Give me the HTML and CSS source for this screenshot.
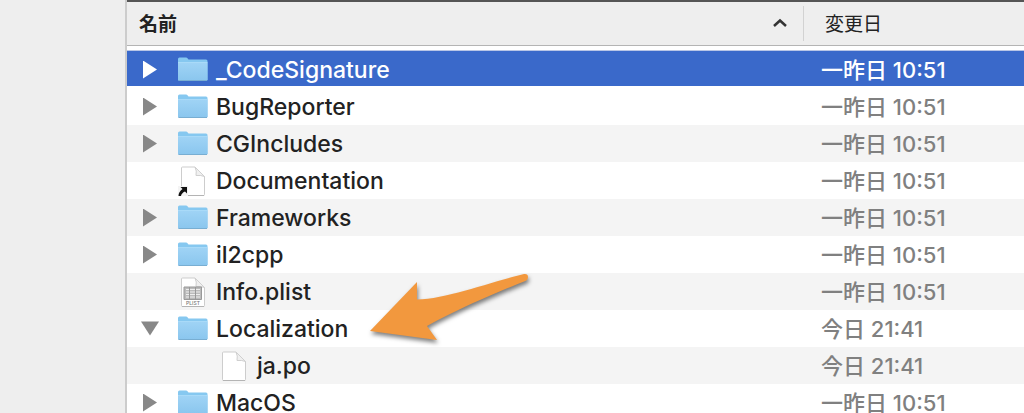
FILE: index.html
```
<!DOCTYPE html>
<html lang="ja">
<head>
    <meta charset="utf-8">
    <meta name="viewport" content="width=device-width">
    <title>Finder</title>
    <link rel="stylesheet" href="styles.css">
</head>
<body>
    <svg class="defs" aria-hidden="true">
        <defs>
            <linearGradient id="blue" x1="0" y1="0" x2="0" y2="1">
                <stop offset="0" stop-color="#9fd3f5"/>
                <stop offset="1" stop-color="#8ac6ee"/>
            </linearGradient>
            <symbol id="folder" viewBox="0 0 32 32">
                <path d="M1 26V5q0-1.500 1.500-1.500H9q1 0 1.700 1l.8 1H29q1.500 0 1.500 1.500V26z" fill="#86c8f0"/>
                <path d="M1 9h29.500v16.500q0 1.200-1.200 1.200H2.200Q1 26.700 1 25.500z" fill="url(#blue)"/>
                <path d="M1 8.500h29.500" stroke="#a9daf8" fill="none"/>
                <path d="M1.500 26.500h28.500" stroke="#78aed2" fill="none"/>
            </symbol>
            <symbol id="page" viewBox="0 0 32 32">
                <path d="M4.500 29.500V3q0-1 1-1H18l9.500 9.500v18q0 1-1 1h-21q-1 0-1-1z" fill="#fff" stroke="#cdcdcd"/>
                <path d="M5 30.500h22" stroke="#b4b4b4"/>
                <path d="M18 2q2 4 1 8.500 5-.5 8.500 1z" fill="#f0f0f0" stroke="#cfcfcf"/>
            </symbol>
        </defs>
    </svg>
    <div class="finder">
        <div class="sidebar"></div>
        <table class="files">
            <thead>
                <tr>
                    <th class="name"><div class="head">名前<svg class="sort" viewBox="0 0 16 10"><path d="M2 8l6-5.500L14 8"/></svg></div></th>
                    <th class="date"><div class="head">変更日</div></th>
                </tr>
            </thead>
            <tbody>
                <tr class="selected">
                    <td><div class="item"><button class="toggle" aria-label="開く"></button><svg class="icon"><use href="#folder"/></svg>_CodeSignature</div></td>
                    <td class="date">一昨日 10:51</td>
                </tr>
                <tr>
                    <td><div class="item"><button class="toggle" aria-label="開く"></button><svg class="icon"><use href="#folder"/></svg>BugReporter</div></td>
                    <td class="date">一昨日 10:51</td>
                </tr>
                <tr>
                    <td><div class="item"><button class="toggle" aria-label="開く"></button><svg class="icon"><use href="#folder"/></svg>CGIncludes</div></td>
                    <td class="date">一昨日 10:51</td>
                </tr>
                <tr>
                    <td><div class="item file"><svg class="icon" viewBox="0 0 32 32"><use href="#page"/><path d="M1 21h10v10H1z" fill="#f4f4f4"/><path d="M3.500 22H10v6.500l-2-2Q4.500 28 4 31H1.500Q1.500 27 5.500 24z" fill="#111"/></svg>Documentation</div></td>
                    <td class="date">一昨日 10:51</td>
                </tr>
                <tr>
                    <td><div class="item"><button class="toggle" aria-label="開く"></button><svg class="icon"><use href="#folder"/></svg>Frameworks</div></td>
                    <td class="date">一昨日 10:51</td>
                </tr>
                <tr>
                    <td><div class="item"><button class="toggle" aria-label="開く"></button><svg class="icon"><use href="#folder"/></svg>il2cpp</div></td>
                    <td class="date">一昨日 10:51</td>
                </tr>
                <tr>
                    <td><div class="item file"><svg class="icon" viewBox="0 0 32 32"><use href="#page"/><path d="M7 11h17.500v12.500H7z" fill="#bbb"/><path d="M9 13.500h14M9 16h14M9 18.500h14M9 21h14" stroke="#eee"/><path d="M7 11h17.500v12.500H7zM12.500 11v12.500M18.500 11v12.500" fill="none" stroke="#999"/><text class="kind" x="16" y="29">PLIST</text></svg>Info.plist</div></td>
                    <td class="date">一昨日 10:51</td>
                </tr>
                <tr>
                    <td>
                        <div class="item"><button class="toggle open" aria-label="閉じる"></button><svg class="icon"><use href="#folder"/></svg>Localization
                            <svg class="arrow" viewBox="0 0 170 84"><path d="M5 68L52 19V36.500C82 36 125 19 159 11q4-.5 4 3t-4 4.500C130 30 92 46 62 63L72 77z"/></svg>
                        </div>
                    </td>
                    <td class="date">今日 21:41</td>
                </tr>
                <tr>
                    <td><div class="item file child"><svg class="icon"><use href="#page"/></svg>ja.po</div></td>
                    <td class="date">今日 21:41</td>
                </tr>
                <tr>
                    <td><div class="item"><button class="toggle" aria-label="開く"></button><svg class="icon"><use href="#folder"/></svg>MacOS</div></td>
                    <td class="date">一昨日 10:51</td>
                </tr>
            </tbody>
        </table>
    </div>
</body>
</html>
```
FILE: styles.css
```
* { box-sizing: border-box; }
body {
    margin: 0;
    background: #fff;
    color: #222;
    font-family: Inter, "Noto Sans CJK JP", sans-serif;
    font-size: 23px;
    font-weight: 500;
}
.defs { position: absolute; width: 0; height: 0; }
.finder {
    display: flex;
    height: 100vh;
    overflow: hidden;
}
.sidebar {
    flex: none;
    width: 127px;
    background: #eee;
    border-right: 2px solid #ccc;
}
.files {
    flex: 1;
    align-self: flex-start;
    border-spacing: 0;
    table-layout: fixed;
}
th, td { padding: 0; }

th {
    height: 51px;
    padding-bottom: 4px;
    border-bottom: 1px solid #b9c6e6;
    font-size: 19px;
    font-weight: 700;
    text-align: left;
}
th.date { font-weight: 400; }
.head {
    display: flex;
    align-items: center;
    height: 46px;
    padding: 0 12px 2px;
    background: #eee;
    border-top: 2px solid #555;
    border-bottom: 1px solid #b4b4b4;
}
.date { width: 221px; }
.date .head {
    padding: 0 22px 2px;
    background: linear-gradient(#d2d2d2, #d2d2d2) 0 4px / 1px 35px no-repeat #eee;
}
.sort {
    width: 16px;
    height: 10px;
    margin-left: auto;
    margin-right: 3px;
    fill: none;
    stroke: #333;
    stroke-width: 2.500;
}

td { height: 37px; }
td.date {
    padding-left: 18px;
    color: #808080;
    font-size: 22px;
    line-height: 36px;
}
tbody tr:nth-child(odd) { background: #f4f4f4; }
tbody tr.selected { background: linear-gradient(#3a69ca 35px, #fff 35px); }
.selected td { color: #fff; }
.item {
    display: flex;
    position: relative;
    align-items: center;
    height: 37px;
    padding-left: 14px;
}
.file { padding-left: 50px; }
.child { padding-left: 91px; }
.icon {
    flex: none;
    width: 32px;
    height: 32px;
    margin-right: 7px;
}
.kind { font-size: 5px; text-anchor: middle; fill: #777; }
.toggle {
    width: 18px;
    height: 18px;
    margin-right: 18px;
    padding: 0;
    border: 0;
    background: #888;
    clip-path: polygon(2px 0, 16px 9px, 2px 18px);
}
.selected .toggle { background: #fff; }
.open { clip-path: polygon(0 2px, 18px 2px, 9px 16px); }
.arrow {
    position: absolute;
    left: 238px;
    bottom: 0;
    z-index: 1;
    width: 170px;
    height: 84px;
    fill: #f2983e;
    filter: drop-shadow(1px 3px 2px rgba(0, 0, 0, .5));
}
```
